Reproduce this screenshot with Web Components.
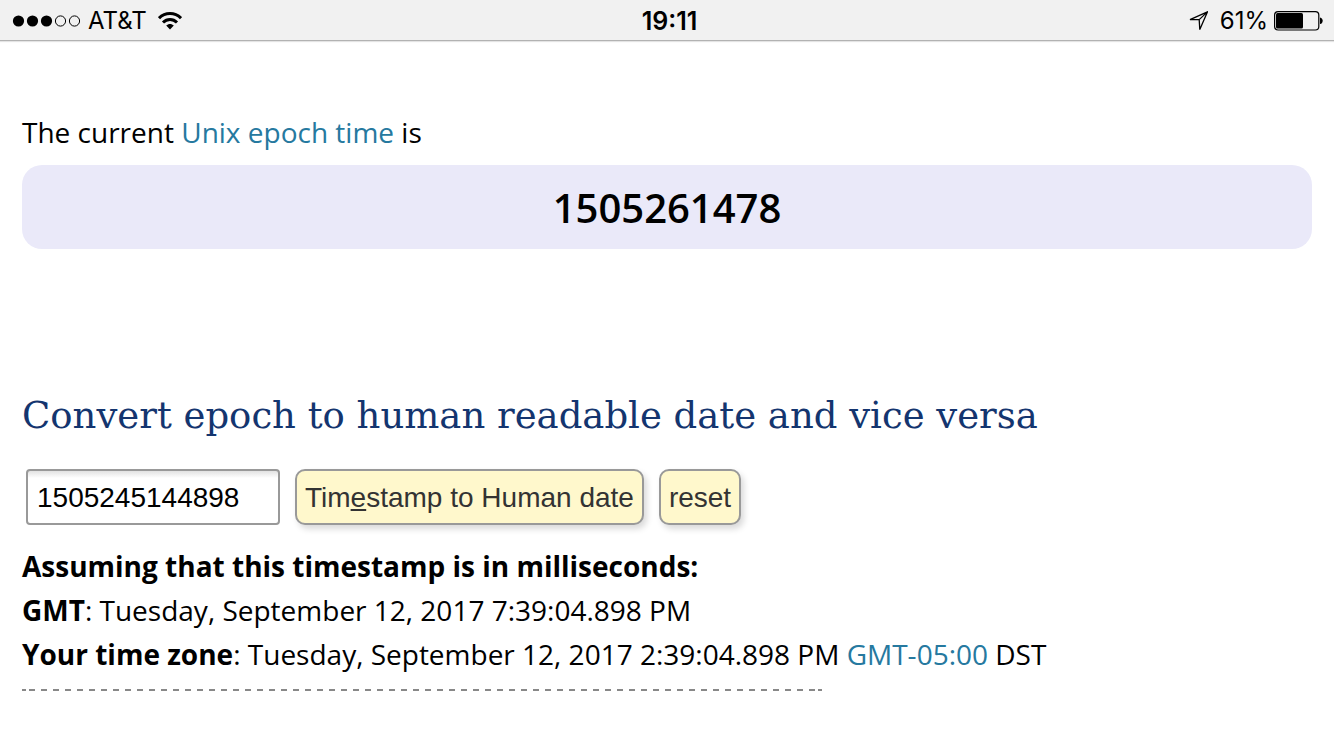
<!DOCTYPE html>
<html lang="en">
<head>
  <meta charset="utf-8">
  <meta name="viewport" content="width=device-width, initial-scale=1">
  <title>Epoch Converter</title>
  <style>
    body {
      margin: 0;
      background: #fff;
      color: #000;
      font: 28px/44px "Open Sans", sans-serif;
    }
    main {
      padding: 69px 22px 48px;
    }
    a {
      color: #26799f;
      text-decoration: none;
    }
    p {
      margin: 0;
    }
  </style>
</head>
<body>
  <status-bar>
    <span slot="carrier">AT&amp;T</span>
    <span slot="time">19:11</span>
    <span slot="battery">61%</span>
  </status-bar>
  <main>
    <epoch-clock value="1505261478">
      The current <a href="#epoch">Unix epoch time</a> is
    </epoch-clock>
    <epoch-converter value="1505245144898">
      <span slot="title">Convert epoch to human readable date and vice versa</span>
      <conversion-result>
        <span slot="note">Assuming that this timestamp is in milliseconds:</span>
        <p><b>GMT</b>: Tuesday, September 12, 2017 7:39:04.898 PM</p>
        <p><b>Your time zone</b>: Tuesday, September 12, 2017 2:39:04.898 PM <a href="#timezone">GMT-05:00</a> DST</p>
      </conversion-result>
    </epoch-converter>
  </main>

  <script>
    class StatusBar extends HTMLElement {
      constructor() {
        super();
        this.attachShadow({ mode: 'open' });
      }

      connectedCallback() {
        this.shadowRoot.innerHTML = `
          <style>
            :host {
              display: grid;
              grid-template-columns: 1fr auto 1fr;
              align-items: center;
              box-sizing: border-box;
              height: 41px;
              padding: 1px 11px 0 12px;
              background: #f1f1f1;
              border-bottom: 1px solid #b2b2b2;
              box-shadow: 0 1px 1px #e4e4e4;
              font: 24px/40px Inter, sans-serif;
            }
            div {
              display: flex;
              align-items: center;
            }
            .left {
              gap: 7px;
            }
            .right {
              justify-content: flex-end;
              gap: 6px;
            }
            .time {
              padding-left: 4px;
              font-size: 25px;
              font-weight: 600;
            }
            .wifi {
              margin-left: 4px;
            }
            .arrow {
              margin-right: 6px;
            }
            svg {
              display: block;
            }
          </style>
          <div class="left">
            <svg width="69" height="14" viewBox="0 0 69 14">
              <circle cx="6.5" cy="7" r="5.6"/>
              <circle cx="20.5" cy="7" r="5.6"/>
              <circle cx="34.5" cy="7" r="5.6"/>
              <circle cx="48.5" cy="7" r="5.1" fill="none" stroke="#000"/>
              <circle cx="62.5" cy="7" r="5.1" fill="none" stroke="#000"/>
            </svg>
            <slot name="carrier"></slot>
            <svg class="wifi" width="24" height="20" viewBox="0 0 24 20">
              <g fill="none" stroke="#000" stroke-width="3">
                <path d="M1 7.2C7.2 1 16.8 1 23 7.2"/>
                <path d="M5 11.5C9 7.5 15 7.5 19 11.5"/>
              </g>
              <path d="M8.2 14.6C10.4 12.5 13.6 12.5 15.8 14.6L12 18.6Z"/>
            </svg>
          </div>
          <div class="time"><slot name="time"></slot></div>
          <div class="right">
            <svg class="arrow" width="20" height="20" viewBox="0 0 20 20">
              <path d="M19.4 .9L2 8.6H11.2L11.8 18.6ZM19.4 .9L11.2 8.6" fill="none" stroke="#000" stroke-width="1.3"/>
            </svg>
            <slot name="battery"></slot>
            <svg width="49" height="20" viewBox="0 0 49 20">
              <rect x=".6" y=".6" width="44.2" height="18.4" rx="3.5" fill="none" stroke="#000" stroke-width="1.2"/>
              <rect x="2" y="2" width="27" height="15.6" rx="1.5"/>
              <path d="M46 6.5C49.6 7 49.6 12.6 46 13.1Z"/>
            </svg>
          </div>
        `;
      }
    }
    customElements.define('status-bar', StatusBar);

    class EpochClock extends HTMLElement {
      constructor() {
        super();
        this.attachShadow({ mode: 'open' });
      }

      connectedCallback() {
        this.shadowRoot.innerHTML = `
          <style>
            :host {
              display: block;
            }
            p {
              margin: 0 0 11px;
            }
            .clock {
              padding: 21px 20px 19px;
              border-radius: 20px;
              background: #eae9f9;
              font-size: 40px;
              font-weight: 600;
              text-align: center;
            }
          </style>
          <p><slot></slot></p>
          <div class="clock">${this.getAttribute('value')}</div>
        `;
      }
    }
    customElements.define('epoch-clock', EpochClock);

    class EpochConverter extends HTMLElement {
      constructor() {
        super();
        this.attachShadow({ mode: 'open' });
      }

      connectedCallback() {
        this.shadowRoot.innerHTML = `
          <style>
            :host {
              display: block;
              margin-top: 141px;
            }
            h2 {
              margin: 0 0 27px;
              color: #14356f;
              font: 400 37px/52px "Roboto Slab", "DejaVu Serif", serif;
            }
            form {
              display: flex;
              flex-wrap: wrap;
              gap: 15px;
              margin: 0 4px 19px;
            }
            input,
            button {
              box-sizing: border-box;
              height: 56px;
              margin: 0;
              border: 2px solid #999;
              font: 28px/32px "Liberation Sans", sans-serif;
            }
            input {
              width: 254px;
              padding: 2px 9px 0;
              border-radius: 4px;
              background: linear-gradient(#e2e2e2, #fff 7px);
              color: #000;
            }
            button {
              padding: 2px 8px 0;
              border-radius: 10px;
              background: #fff8cc;
              box-shadow: 3px 4px 6px rgba(0, 0, 0, .15);
              color: #333;
            }
          </style>
          <h2><slot name="title"></slot></h2>
          <form>
            <input type="text" aria-label="Timestamp" value="${this.getAttribute('value')}">
            <button type="button">Tim<u>e</u>stamp to Human date</button>
            <button type="reset">reset</button>
          </form>
          <slot></slot>
        `;
      }
    }
    customElements.define('epoch-converter', EpochConverter);

    class ConversionResult extends HTMLElement {
      constructor() {
        super();
        this.attachShadow({ mode: 'open' });
      }

      connectedCallback() {
        this.shadowRoot.innerHTML = `
          <style>
            :host {
              display: block;
            }
            /* even 6px dashes between two short end caps */
            hr {
              box-sizing: border-box;
              max-width: 800px;
              height: 2px;
              margin: 13px 0 0;
              padding: 0 3px;
              border: solid #888;
              border-width: 0 4px;
              background: repeating-linear-gradient(90deg, #888 0 6px, transparent 6px 12px) content-box;
            }
          </style>
          <strong><slot name="note"></slot></strong>
          <slot></slot>
          <hr>
        `;
      }
    }
    customElements.define('conversion-result', ConversionResult);
  </script>
</body>
</html>
